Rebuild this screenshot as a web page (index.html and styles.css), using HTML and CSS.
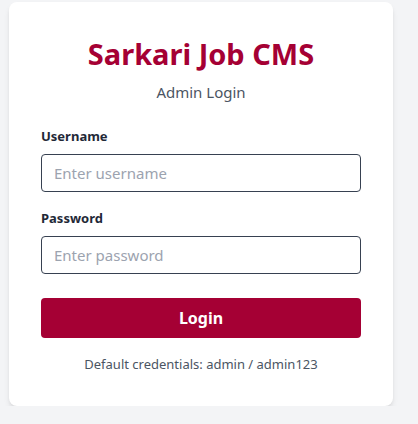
FILE: index.html
```html
<!DOCTYPE html>
<html lang="en">
<head>
<meta charset="utf-8">
<title>Sarkari Job CMS - Admin Login</title>
<link rel="stylesheet" href="styles.css">
</head>
<body>
<main class="page">
  <div class="card">
    <h1 class="title">Sarkari Job CMS</h1>
    <p class="subtitle">Admin Login</p>
    <form class="form">
      <div class="field">
        <label class="label" for="username">Username</label>
        <input class="input" id="username" type="text" placeholder="Enter username">
      </div>
      <div class="field">
        <label class="label" for="password">Password</label>
        <input class="input" id="password" type="password" placeholder="Enter password">
      </div>
      <button class="button" type="button">Login</button>
    </form>
    <p class="hint">Default credentials: admin / admin123</p>
  </div>
</main>
</body>
</html>
```
FILE: styles.css
```css
html, body {
  margin: 0;
  padding: 0;
  background: #f3f4f6;
  font-family: "Noto Sans", "Open Sans", sans-serif;
}
.page {
  padding: 2px 0 0 9px;
}
.card {
  width: 384px;
  box-sizing: border-box;
  padding: 32px;
  background: #ffffff;
  border-radius: 8px;
  box-shadow: 0 4px 6px -1px rgba(0,0,0,0.1), 0 2px 4px -2px rgba(0,0,0,0.1);
}
.title {
  margin: 0;
  text-align: center;
  font-size: 29px;
  line-height: 36px;
  font-weight: 700;
  color: #a50034;
  padding-top: 2px;
}
.subtitle {
  margin: 8px 0 0;
  text-align: center;
  font-size: 15px;
  line-height: 24px;
  color: #4b5563;
}
.form {
  margin-top: 22px;
  display: flex;
  flex-direction: column;
}
.field {
  display: flex;
  flex-direction: column;
  margin-bottom: 16px;
}
.field:last-of-type {
  margin-bottom: 24px;
}
.label {
  font-size: 13px;
  line-height: 20px;
  font-weight: 700;
  color: #1f2937;
  margin-bottom: 8px;
}
.input {
  height: 38px;
  box-sizing: border-box;
  border: 1px solid #374151;
  border-radius: 4px;
  padding: 0 12px;
  font-family: inherit;
  font-size: 15px;
  color: #111827;
  outline: none;
}
.input::placeholder {
  color: #9ca3af;
}
.button {
  height: 40px;
  border: 0;
  border-radius: 4px;
  background: #a50034;
  color: #ffffff;
  font-family: inherit;
  font-size: 16px;
  font-weight: 700;
  cursor: pointer;
}
.hint {
  margin: 16px 0 0;
  text-align: center;
  font-size: 13px;
  line-height: 20px;
  color: #4b5563;
}
```
